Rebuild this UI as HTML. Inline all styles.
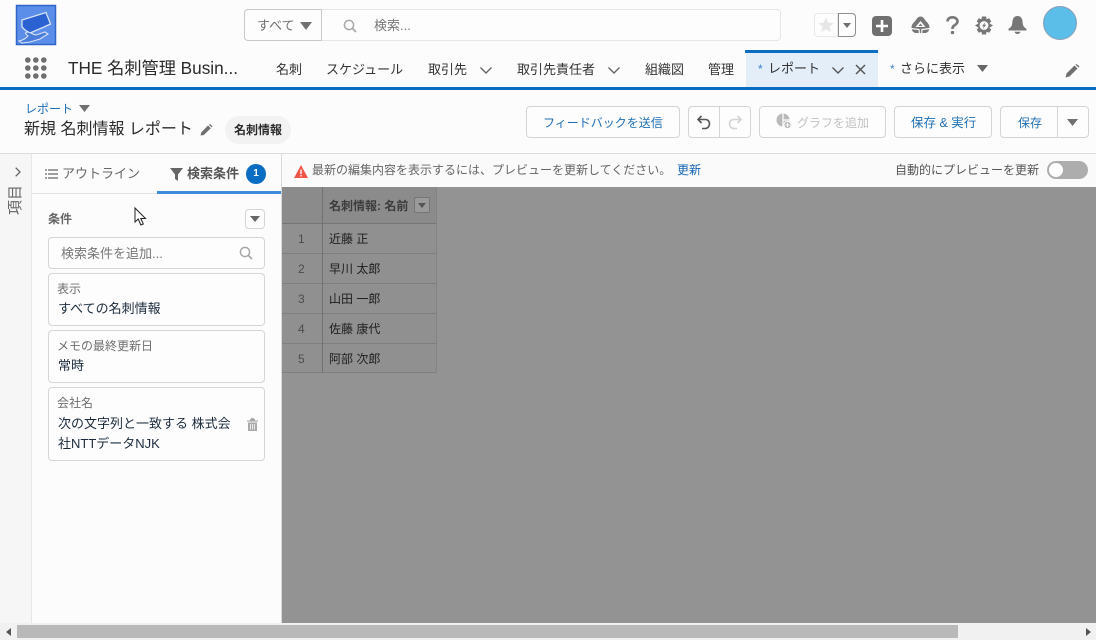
<!DOCTYPE html>
<html lang="ja"><head><meta charset="utf-8">
<style>
html,body{margin:0;padding:0;width:1096px;height:640px;overflow:hidden;background:#fcfcfc}
body{position:relative;font-family:"Liberation Sans","Noto Sans CJK JP",sans-serif;font-size:13px;color:#333}
.t{position:absolute;white-space:nowrap;line-height:16px}
.b{position:absolute;box-sizing:border-box;border:1px solid #d4d4d4;border-radius:4px;background:#fdfdfd}
.a{position:absolute}
svg{position:absolute;overflow:visible}
.blue{color:#1f6fb5}
.card{position:absolute;left:48px;width:217px;box-sizing:border-box;border:1px solid #d6d6d6;border-radius:4px;background:#fdfdfd}
.lab{color:#6f6f6f}
.val{color:#1b2b3c}
.row{position:absolute;left:282px;width:155px;height:30px;box-sizing:border-box;border-bottom:1px solid #7f7f7f;background:#909090}
</style></head><body>

<!-- logo -->
<svg style="left:16px;top:5px" width="40" height="40" viewBox="0 0 40 40">
<rect x="0.5" y="0.5" width="39" height="39" fill="#5b8ee8" stroke="#2f66c8" stroke-width="1.5"/>
<path d="M6 15L30 7.5L34.5 19L28 22L14 28L9 25L6 22Z" fill="#2b62d2" stroke="#d8e3f7" stroke-width="1.3"/>
<path d="M3 36C8 35 10 33 12 31C10 29 8 28 11 27C15 27 17 30 20 30L29 27L32 29L24 34L14 37L6 38Z" fill="#4a7cdc" stroke="#d8e3f7" stroke-width="1.1"/>
</svg>

<!-- search -->
<div class="b" style="left:244px;top:9px;width:537px;height:32px;border-color:#e6e6e6"></div>
<div class="b" style="left:244px;top:9px;width:78px;height:32px;border-color:#c9c9c9;border-radius:4px 0 0 4px"></div>
<div class="t" style="left:257px;top:18px;color:#707070;font-size:13px">すべて</div>
<svg style="left:300px;top:22px" width="12" height="8"><path d="M0 0H12L6 8Z" fill="#707070"/></svg>
<svg style="left:343px;top:19px" width="14" height="14" viewBox="0 0 14 14"><circle cx="6" cy="6" r="4.6" fill="none" stroke="#a8a8a8" stroke-width="1.5"/><path d="M9.5 9.5L13 13" stroke="#a8a8a8" stroke-width="1.7"/></svg>
<div class="t" style="left:374px;top:18px;color:#777;font-size:13px">検索...</div>

<!-- top right icons -->
<div class="b" style="left:814px;top:13px;width:24px;height:24px;border-color:#e8e8e8;border-radius:4px 0 0 4px"></div>
<svg style="left:818px;top:17px" width="16" height="16" viewBox="0 0 16 16"><path d="M8 0.5L10.2 5.6L15.6 6.1L11.5 9.7L12.8 15L8 12.2L3.2 15L4.5 9.7L0.4 6.1L5.8 5.6Z" fill="#e6e6e6"/></svg>
<div class="b" style="left:838px;top:13px;width:18px;height:24px;border-color:#8e8e8e;border-radius:0 4px 4px 0"></div>
<svg style="left:843px;top:23px" width="8" height="5"><path d="M0 0H8L4 5Z" fill="#707070"/></svg>
<div class="a" style="left:872px;top:16px;width:20px;height:20px;background:#707070;border-radius:4px"></div>
<svg style="left:872px;top:16px" width="20" height="20"><path d="M10 4V16M4 10H16" stroke="#fff" stroke-width="2.6"/></svg>
<svg style="left:911px;top:16px" width="19" height="18" viewBox="0 0 19 18"><path d="M9.5 0.5C12 0.5 13 2.5 14.5 4.5C16 6.5 18.5 8 18.5 11.5C18.5 14 17 17 14 17H5C2 17 0.5 14 0.5 11.5C0.5 8 3 6.5 4.5 4.5C6 2.5 7 0.5 9.5 0.5Z" fill="#777"/><path d="M9.5 5L14.5 11H4.5Z" fill="#fcfcfc"/><path d="M9.5 7.5L11.5 10H7.5Z" fill="#777"/><path d="M0 12.5L8 13.5L8.5 18M19 12.5L11 13.5L10.5 18" fill="none" stroke="#fcfcfc" stroke-width="1.2"/></svg>
<svg style="left:946px;top:16px" width="13" height="19" viewBox="0 0 13 19"><path d="M1.5 5.5C1.5 2.5 3.8 1.3 6.5 1.3C9.4 1.3 11.5 3 11.5 5.4C11.5 8 9 8.8 7.6 10C6.8 10.7 6.5 11.5 6.5 13" fill="none" stroke="#777" stroke-width="2.6"/><circle cx="6.5" cy="16.6" r="1.7" fill="#777"/></svg>
<svg style="left:975px;top:16px" width="18" height="19" viewBox="0 0 18 19"><path d="M7 .5H11L11.6 3.2L14.2 2.2L16.3 5.4L14.4 7.3L18 9.5L14.4 11.7L16.3 13.6L14.2 16.8L11.6 15.8L11 18.5H7L6.4 15.8L3.8 16.8L1.7 13.6L3.6 11.7L0 9.5L3.6 7.3L1.7 5.4L3.8 2.2L6.4 3.2Z" fill="#777"/><circle cx="9" cy="9.5" r="4.4" fill="#fcfcfc"/><path d="M10.4 6L7 10.3H8.8L7.8 13L11.2 8.7H9.4Z" fill="#777"/></svg>
<svg style="left:1008px;top:16px" width="19" height="18" viewBox="0 0 19 18"><path d="M9.5 0C5.8 0 4.6 3 4.4 6C4.1 10 3 11.5 0.5 12.8V14.5H18.5V12.8C16 11.5 14.9 10 14.6 6C14.4 3 13.2 0 9.5 0Z" fill="#777"/><path d="M6.5 15.7H12.5C12.2 17 11 18 9.5 18C8 18 6.8 17 6.5 15.7Z" fill="#777"/></svg>
<div class="a" style="left:1043px;top:6px;width:32px;height:32px;border-radius:50%;background:#5bbee8;border:1px solid #8a9db5"></div>

<!-- nav -->
<svg style="left:25px;top:57px" width="22" height="22">
<g fill="#707070"><circle cx="2.8" cy="3" r="2.8"/><circle cx="10.8" cy="3" r="2.8"/><circle cx="18.8" cy="3" r="2.8"/><circle cx="2.8" cy="11" r="2.8"/><circle cx="10.8" cy="11" r="2.8"/><circle cx="18.8" cy="11" r="2.8"/><circle cx="2.8" cy="19" r="2.8"/><circle cx="10.8" cy="19" r="2.8"/><circle cx="18.8" cy="19" r="2.8"/></g></svg>
<div class="t" style="left:68px;top:58px;font-size:17.2px;line-height:20px;color:#2b2b2b">THE 名刺管理 Busin...</div>
<div class="t" style="left:276px;top:62px">名刺</div>
<div class="t" style="left:326px;top:62px">スケジュール</div>
<div class="t" style="left:428px;top:62px">取引先</div>
<svg style="left:480px;top:67px" width="12" height="7"><path d="M0.5 0.5L6 6L11.5 0.5" fill="none" stroke="#666" stroke-width="1.4"/></svg>
<div class="t" style="left:517px;top:62px">取引先責任者</div>
<svg style="left:608px;top:67px" width="12" height="7"><path d="M0.5 0.5L6 6L11.5 0.5" fill="none" stroke="#666" stroke-width="1.4"/></svg>
<div class="t" style="left:645px;top:62px">組織図</div>
<div class="t" style="left:708px;top:62px">管理</div>
<div class="a" style="left:746px;top:50px;width:132px;height:37px;background:#e3eef9"></div>
<div class="a" style="left:745px;top:50px;width:133px;height:3px;background:#0a6cc2"></div>
<div class="t" style="left:758px;top:61px;color:#3a7fc4;font-size:12px">*</div>
<div class="t" style="left:768px;top:61px">レポート</div>
<svg style="left:832px;top:67px" width="12" height="7"><path d="M0.5 0.5L6 6L11.5 0.5" fill="none" stroke="#555" stroke-width="1.4"/></svg>
<svg style="left:855px;top:64px" width="11" height="11"><path d="M1 1L10 10M10 1L1 10" stroke="#555" stroke-width="1.5"/></svg>
<div class="t" style="left:890px;top:61px;color:#3a7fc4;font-size:12px">*</div>
<div class="t" style="left:900px;top:61px">さらに表示</div>
<svg style="left:977px;top:65px" width="11" height="7"><path d="M0 0H11L5.5 7Z" fill="#666"/></svg>
<svg style="left:1065px;top:64px" width="15" height="14" viewBox="0 0 15 14"><path d="M0.5 13.5L1.5 9.5L9.5 1.5L12.5 4.5L4.5 12.5Z" fill="#707070"/><path d="M10.5 .8L11.5 0L14.5 2.5L13.5 3.5Z" fill="#707070"/></svg>
<div class="a" style="left:0;top:87px;width:1096px;height:3px;background:#0a6cc2"></div>

<!-- page header -->
<div class="t" style="left:25px;top:101px;font-size:12px;color:#1f6fb5">レポート</div>
<svg style="left:79px;top:105px" width="11" height="7"><path d="M0 0H11L5.5 7Z" fill="#707070"/></svg>
<div class="t" style="left:24px;top:120px;font-size:16px;line-height:20px;color:#2b2b2b">新規 名刺情報 レポート</div>
<svg style="left:200px;top:124px" width="13" height="12" viewBox="0 0 13 12"><path d="M0.5 11.5L1.2 8.5L8 1.5L10.8 4.2L3.8 11Z" fill="#707070"/><path d="M9 .8L10 0L12.6 2.4L11.6 3.4Z" fill="#707070"/></svg>
<div class="a" style="left:225px;top:116px;width:66px;height:28px;background:#f2f2f2;border-radius:14px"></div>
<div class="t" style="left:234px;top:122px;font-size:12px;font-weight:bold;color:#2b2b2b">名刺情報</div>

<div class="b" style="left:526px;top:106px;width:154px;height:32px"></div>
<div class="t blue" style="left:543px;top:115px;font-size:12px">フィードバックを送信</div>
<div class="b" style="left:688px;top:106px;width:63px;height:32px"></div>
<div class="a" style="left:719px;top:106px;width:1px;height:32px;background:#d4d4d4"></div>
<svg style="left:697px;top:115px" width="14" height="15" viewBox="0 0 14 15"><path d="M1 4.5H8.5C11 4.5 12.5 6.5 12.5 8.8C12.5 11 11 13.5 8 13.5H5" fill="none" stroke="#555" stroke-width="1.6"/><path d="M4.5 1L1 4.5L4.5 8" fill="none" stroke="#555" stroke-width="1.6"/></svg>
<svg style="left:728px;top:115px" width="14" height="15" viewBox="0 0 14 15"><path d="M13 4.5H5.5C3 4.5 1.5 6.5 1.5 8.8C1.5 11 3 13.5 6 13.5H9" fill="none" stroke="#d2d2d2" stroke-width="1.6"/><path d="M9.5 1L13 4.5L9.5 8" fill="none" stroke="#d2d2d2" stroke-width="1.6"/></svg>
<div class="b" style="left:759px;top:106px;width:127px;height:32px"></div>
<svg style="left:776px;top:113px" width="15" height="16" viewBox="0 0 15 16"><circle cx="7" cy="7" r="6.5" fill="#b9b9b9"/><path d="M7 0V14M7 7H14" stroke="#fdfdfd" stroke-width="1.2"/><circle cx="11.5" cy="12" r="3.6" fill="#b9b9b9" stroke="#fdfdfd"/><path d="M9.5 12H13.5M11.5 10V14" stroke="#fff"/></svg>
<div class="t" style="left:797px;top:115px;font-size:12px;color:#c2c2c2">グラフを追加</div>
<div class="b" style="left:894px;top:106px;width:98px;height:32px"></div>
<div class="t blue" style="left:911px;top:115px;font-size:12.5px">保存 &amp; 実行</div>
<div class="b" style="left:1000px;top:106px;width:89px;height:32px"></div>
<div class="a" style="left:1057px;top:106px;width:1px;height:32px;background:#d4d4d4"></div>
<div class="t blue" style="left:1018px;top:115px;font-size:12px">保存</div>
<svg style="left:1067px;top:119px" width="11" height="7"><path d="M0 0H11L5.5 7Z" fill="#707070"/></svg>

<!-- dividers -->
<div class="a" style="left:0;top:153px;width:1096px;height:1px;background:#dcdcdc"></div>

<!-- left rail -->
<div class="a" style="left:0;top:154px;width:31px;height:470px;background:#f6f6f6;border-right:1px solid #e6e6e6"></div>
<svg style="left:15px;top:167px" width="6" height="10"><path d="M0.7 0.7L5 5L0.7 9.3" fill="none" stroke="#666" stroke-width="1.3"/></svg>
<div class="t" style="left:1px;top:192px;width:30px;font-size:15px;line-height:16px;color:#666;transform:rotate(-90deg);text-align:center">項目</div>

<!-- panel -->
<div class="a" style="left:32px;top:154px;width:249px;height:470px;background:#fcfcfc"></div>
<div class="a" style="left:32px;top:193px;width:125px;height:1px;background:#e3e3e3"></div>
<div class="a" style="left:157px;top:191px;width:124px;height:3px;background:#3f8bd8"></div>
<svg style="left:45px;top:169px" width="13" height="10"><path d="M3 1H13M3 5H13M3 9H13" stroke="#666" stroke-width="1.2"/><path d="M0 1H2M0 5H2M0 9H2" stroke="#666" stroke-width="1.2"/></svg>
<div class="t" style="left:62px;top:166px;color:#666">アウトライン</div>
<svg style="left:170px;top:168px" width="13" height="13"><path d="M0 0H13L8 6.5V13L5 11V6.5Z" fill="#666"/></svg>
<div class="t" style="left:187px;top:166px;font-weight:bold;color:#555;font-size:13px">検索条件</div>
<div class="a" style="left:246px;top:164px;width:20px;height:20px;border-radius:50%;background:#0a6cc2;color:#fff;font-size:10px;font-weight:bold;text-align:center;line-height:20px">1</div>

<div class="t" style="left:48px;top:211px;font-weight:bold;font-size:12px;color:#666">条件</div>
<div class="b" style="left:245px;top:209px;width:20px;height:20px"></div>
<svg style="left:250px;top:216px" width="10" height="6"><path d="M0 0H10L5 6Z" fill="#666"/></svg>
<div class="b" style="left:48px;top:237px;width:217px;height:32px"></div>
<div class="t" style="left:61px;top:246px;color:#777">検索条件を追加...</div>
<svg style="left:239px;top:246px" width="14" height="14" viewBox="0 0 14 14"><circle cx="6" cy="6" r="4.6" fill="none" stroke="#a8a8a8" stroke-width="1.5"/><path d="M9.5 9.5L13 13" stroke="#a8a8a8" stroke-width="1.7"/></svg>

<div class="card" style="top:273px;height:53px"></div>
<div class="t lab" style="left:57px;top:281px;font-size:12px">表示</div>
<div class="t val" style="left:58px;top:301px">すべての名刺情報</div>
<div class="card" style="top:330px;height:53px"></div>
<div class="t lab" style="left:57px;top:338px;font-size:12px">メモの最終更新日</div>
<div class="t val" style="left:58px;top:358px">常時</div>
<div class="card" style="top:387px;height:74px"></div>
<div class="t lab" style="left:57px;top:395px;font-size:12px">会社名</div>
<div class="t val" style="left:58px;top:416px">次の文字列と一致する 株式会</div>
<div class="t val" style="left:58px;top:436px">社NTTデータNJK</div>
<svg style="left:247px;top:418px" width="11" height="13" viewBox="0 0 11 13"><path d="M0 2.5H11V3.6H0ZM4 1V0H7V1ZM3 1H8V2.5H3Z" fill="#aaa"/><path d="M1 4.5H10V13H1Z" fill="#aaa"/><path d="M3.5 6V11.5M5.5 6V11.5M7.5 6V11.5" stroke="#fcfcfc" stroke-width=".8"/></svg>

<!-- cursor -->
<svg style="left:134px;top:207px" width="14" height="20" viewBox="0 0 14 20"><path d="M1 1V15L4.3 12L6.8 18L9.3 17L6.8 11.5H11.5Z" fill="#fff" stroke="#222" stroke-width="1"/></svg>

<!-- notice -->
<div class="a" style="left:281px;top:154px;width:1px;height:470px;background:#d8d8d8"></div>
<div class="a" style="left:282px;top:154px;width:814px;height:33px;background:#fbfafa"></div>
<svg style="left:294px;top:165px" width="14" height="13" viewBox="0 0 14 13"><path d="M7 0L14 13H0Z" fill="#f0564a"/><path d="M7 4.5V9M7 10V11.5" stroke="#fff" stroke-width="1.3"/></svg>
<div class="t" style="left:312px;top:162px;font-size:12px;color:#666">最新の編集内容を表示するには、プレビューを更新してください。</div>
<div class="t" style="left:677px;top:162px;font-size:12px;color:#1565b5">更新</div>
<div class="t" style="left:895px;top:162px;font-size:12px;color:#555">自動的にプレビューを更新</div>
<div class="a" style="left:1047px;top:161px;width:41px;height:18px;border-radius:9px;background:#adadad"></div>
<div class="a" style="left:1049px;top:163px;width:14px;height:14px;border-radius:50%;background:#fff"></div>

<!-- gray area -->
<div class="a" style="left:282px;top:187px;width:814px;height:436px;background:#939393"></div>
<div class="a" style="left:282px;top:187px;width:155px;height:37px;background:#8b8b8b;border-bottom:1px solid #757575;box-sizing:border-box"></div>
<div class="row" style="top:224px"></div>
<div class="row" style="top:254px"></div>
<div class="row" style="top:284px"></div>
<div class="row" style="top:314px"></div>
<div class="row" style="top:344px;height:29px"></div>
<div class="a" style="left:322px;top:187px;width:1px;height:186px;background:#727272"></div>
<div class="a" style="left:436px;top:187px;width:1px;height:186px;background:#838383"></div>
<div class="t" style="left:329px;top:198px;font-size:12px;font-weight:bold;color:#3c3c3c">名刺情報: 名前</div>
<div class="a" style="left:414px;top:197px;width:16px;height:16px;box-sizing:border-box;border:1px solid #757575;border-radius:2px;background:#9a9a9a"></div>
<svg style="left:418px;top:203px" width="8" height="5"><path d="M0 0H8L4 5Z" fill="#555"/></svg>
<div class="t" style="left:298px;top:231px;font-size:12px;color:#4c4c4c">1</div>
<div class="t" style="left:298px;top:261px;font-size:12px;color:#4c4c4c">2</div>
<div class="t" style="left:298px;top:291px;font-size:12px;color:#4c4c4c">3</div>
<div class="t" style="left:298px;top:321px;font-size:12px;color:#4c4c4c">4</div>
<div class="t" style="left:298px;top:351px;font-size:12px;color:#4c4c4c">5</div>
<div class="t" style="left:329px;top:231px;font-size:12px;color:#1d1d1d">近藤 正</div>
<div class="t" style="left:329px;top:261px;font-size:12px;color:#1d1d1d">早川 太郎</div>
<div class="t" style="left:329px;top:291px;font-size:12px;color:#1d1d1d">山田 一郎</div>
<div class="t" style="left:329px;top:321px;font-size:12px;color:#1d1d1d">佐藤 康代</div>
<div class="t" style="left:329px;top:351px;font-size:12px;color:#1d1d1d">阿部 次郎</div>

<!-- scrollbar -->
<div class="a" style="left:0;top:623px;width:1096px;height:17px;background:#f1f1f1"></div>
<div class="a" style="left:17px;top:625px;width:941px;height:13px;background:#b9b9b9"></div>
<svg style="left:6px;top:628px" width="5" height="8"><path d="M5 0V8L0 4Z" fill="#555"/></svg>
<svg style="left:1086px;top:628px" width="5" height="8"><path d="M0 0V8L5 4Z" fill="#555"/></svg>
</body></html>
